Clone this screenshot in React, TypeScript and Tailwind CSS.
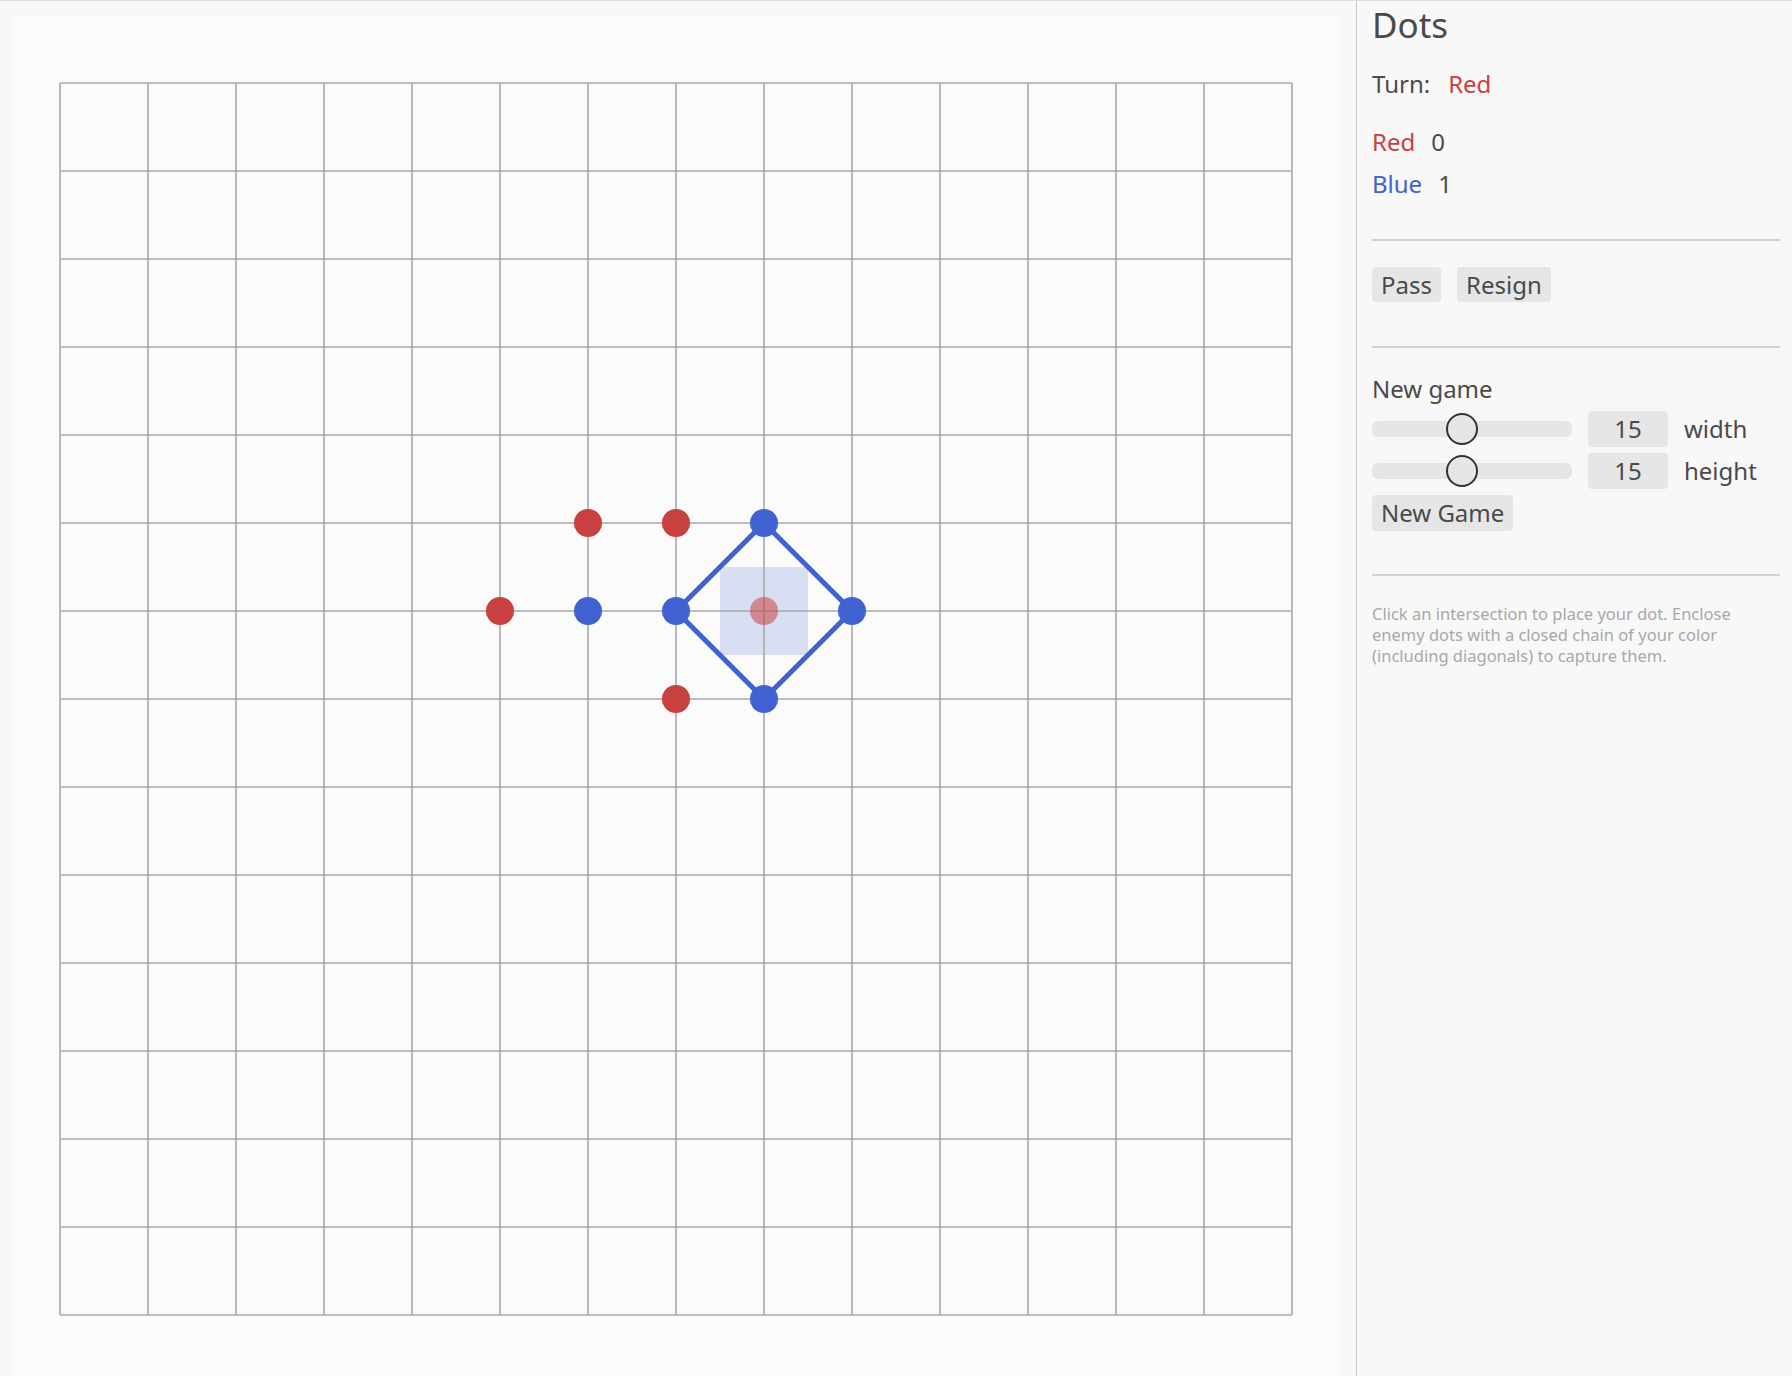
import React from "react";

const CELL = 88;
const N = 15;
const OFF = 2;
const RED = "#c94040";
const BLUE = "#4062d0";

const p = (i: number) => OFF + i * CELL;

const dots: { c: number; r: number; color: string; faded?: boolean }[] = [
  { c: 5, r: 6, color: RED },
  { c: 6, r: 5, color: RED },
  { c: 7, r: 5, color: RED },
  { c: 7, r: 7, color: RED },
  { c: 6, r: 6, color: BLUE },
  { c: 7, r: 6, color: BLUE },
  { c: 8, r: 5, color: BLUE },
  { c: 9, r: 6, color: BLUE },
  { c: 8, r: 7, color: BLUE },
  { c: 8, r: 6, color: RED, faded: true },
];

const chain = [
  [8, 5],
  [9, 6],
  [8, 7],
  [7, 6],
];

function Board() {
  const size = OFF * 2 + (N - 1) * CELL;
  const lines = [];
  for (let i = 0; i < N; i++) {
    lines.push(
      <line key={"v" + i} x1={p(i)} y1={p(0)} x2={p(i)} y2={p(N - 1)} stroke="#a8a8a8" strokeWidth={1.6} />
    );
    lines.push(
      <line key={"h" + i} x1={p(0)} y1={p(i)} x2={p(N - 1)} y2={p(i)} stroke="#a8a8a8" strokeWidth={1.6} />
    );
  }
  return (
    <svg width={size} height={size} viewBox={`0 0 ${size} ${size}`} className="block">
      <rect x={p(8) - CELL / 2} y={p(6) - CELL / 2} width={CELL} height={CELL} fill={BLUE} fillOpacity={0.18} />
      {lines}
      <polygon
        points={chain.map(([c, r]) => `${p(c)},${p(r)}`).join(" ")}
        fill="none"
        stroke={BLUE}
        strokeWidth={5}
        strokeLinejoin="round"
      />
      {dots.map((d, i) => (
        <circle key={i} cx={p(d.c)} cy={p(d.r)} r={14} fill={d.color} fillOpacity={d.faded ? 0.55 : 1} />
      ))}
    </svg>
  );
}

function Slider({ pos }: { pos: number }) {
  return (
    <div className="relative h-[16px] w-[200px] rounded-[6px] bg-[#e6e6e6]">
      <div
        className="absolute top-1/2 h-[32px] w-[32px] -translate-y-1/2 rounded-full border-2 border-[#333333] bg-[#e6e6e6]"
        style={{ left: pos - 16 }}
      />
    </div>
  );
}

export default function App() {
  return (
    <div
      className="flex h-[1376px] w-[1792px] overflow-hidden border-t border-[#dcdcdc] bg-[#f8f8f8] text-[#4a4a4a]"
      style={{ fontFamily: '"Noto Sans", "Open Sans", sans-serif' }}
    >
      <div className="w-[1356px] shrink-0 pl-[12px] pr-[16px] pt-[15px]">
        <div className="h-full bg-[#fbfbfb] pl-[46px] pt-[65px]">
          <Board />
        </div>
      </div>
      <div className="flex-1 border-l-[1.5px] border-[#c8c8c8] pl-[15px] pr-[12px]">
        <div className="mt-[0px] text-[35px] leading-[48px]">Dots</div>
        <div className="mt-[18px] flex gap-[18px] text-[24px] leading-[34px]">
          <span>Turn:</span>
          <span style={{ color: RED }}>Red</span>
        </div>
        <div className="mt-[20px] text-[24px] leading-[42px]">
          <div className="flex gap-[16px]">
            <span style={{ color: RED }}>Red</span>
            <span>0</span>
          </div>
          <div className="flex gap-[16px]">
            <span style={{ color: BLUE }}>Blue</span>
            <span>1</span>
          </div>
        </div>
        <div className="mt-[34px] h-[2px] bg-[#d2d2d2]" />
        <div className="mt-[26px] flex gap-[16px]">
          <button className="h-[35px] rounded-[4px] bg-[#e6e6e6] px-[9px] text-[24px] leading-[35px] text-[#4a4a4a]">
            Pass
          </button>
          <button className="h-[35px] rounded-[4px] bg-[#e6e6e6] px-[9px] text-[24px] leading-[35px] text-[#4a4a4a]">
            Resign
          </button>
        </div>
        <div className="mt-[44px] h-[2px] bg-[#d2d2d2]" />
        <div className="mt-[25px] text-[24px] leading-[32px]">New game</div>
        <div className="mt-[6px] flex items-center gap-[16px]">
          <Slider pos={90} />
          <div className="h-[36px] w-[80px] rounded-[4px] bg-[#e6e6e6] text-center text-[24px] leading-[36px]">15</div>
          <span className="text-[24px] leading-[36px]">width</span>
        </div>
        <div className="mt-[6px] flex items-center gap-[16px]">
          <Slider pos={90} />
          <div className="h-[36px] w-[80px] rounded-[4px] bg-[#e6e6e6] text-center text-[24px] leading-[36px]">15</div>
          <span className="text-[24px] leading-[36px]">height</span>
        </div>
        <button className="mt-[6px] h-[36px] rounded-[4px] bg-[#e6e6e6] px-[9px] text-[24px] leading-[36px] text-[#4a4a4a]">
          New Game
        </button>
        <div className="mt-[43px] h-[2px] bg-[#d2d2d2]" />
        <p className="mt-[27px] w-[400px] text-[16.5px] leading-[21px] text-[#a8a8a8]">
          Click an intersection to place your dot. Enclose enemy dots with a closed chain of your color (including
          diagonals) to capture them.
        </p>
      </div>
    </div>
  );
}
